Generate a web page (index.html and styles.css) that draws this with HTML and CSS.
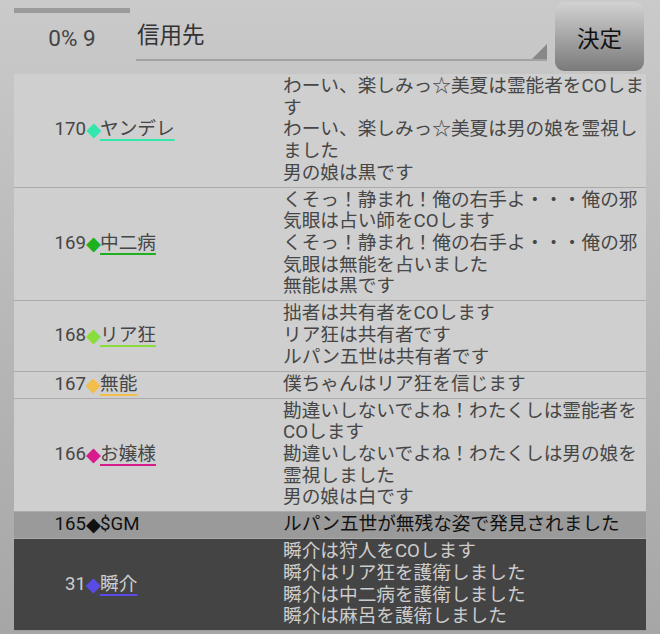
FILE: index.html
```html
<!DOCTYPE html>
<html lang="ja">
<head>
    <meta charset="UTF-8">
    <meta name="viewport" content="width=device-width, initial-scale=1.0">
    <title>信用先</title>
    <link rel="stylesheet" href="styles.css">
</head>
<body>

<div class="top">
    <div class="status">
        <div class="progress"></div>
        <div class="count">0% 9</div>
    </div>
    <div class="target">
        <span class="target-label">信用先</span>
        <span class="arrow"></span>
    </div>
    <button class="decide">決定</button>
</div>

<div class="log">
    <div class="row">
        <span class="no">170</span><span class="mark aqua">◆</span><span class="name aqua">ヤンデレ</span>
        <div class="msg">
            <div>わーい、楽しみっ☆美夏は霊能者をCOします</div>
            <div>わーい、楽しみっ☆美夏は男の娘を霊視しました</div>
            <div>男の娘は黒です</div>
        </div>
    </div>
    <div class="row">
        <span class="no">169</span><span class="mark green">◆</span><span class="name green">中二病</span>
        <div class="msg">
            <div>くそっ！静まれ！俺の右手よ・・・俺の邪気眼は占い師をCOします</div>
            <div>くそっ！静まれ！俺の右手よ・・・俺の邪気眼は無能を占いました</div>
            <div>無能は黒です</div>
        </div>
    </div>
    <div class="row">
        <span class="no">168</span><span class="mark lime">◆</span><span class="name lime">リア狂</span>
        <div class="msg">
            <div>拙者は共有者をCOします</div>
            <div>リア狂は共有者です</div>
            <div>ルパン五世は共有者です</div>
        </div>
    </div>
    <div class="row">
        <span class="no">167</span><span class="mark gold">◆</span><span class="name gold">無能</span>
        <div class="msg">
            <div>僕ちゃんはリア狂を信じます</div>
        </div>
    </div>
    <div class="row">
        <span class="no">166</span><span class="mark pink">◆</span><span class="name pink">お嬢様</span>
        <div class="msg">
            <div>勘違いしないでよね！わたくしは霊能者をCOします</div>
            <div>勘違いしないでよね！わたくしは男の娘を霊視しました</div>
            <div>男の娘は白です</div>
        </div>
    </div>
    <div class="row gm">
        <span class="no">165</span><span class="mark">◆</span><span class="name plain">$GM</span>
        <div class="msg">
            <div>ルパン五世が無残な姿で発見されました</div>
        </div>
    </div>
    <div class="row mine">
        <span class="no">31</span><span class="mark violet">◆</span><span class="name violet">瞬介</span>
        <div class="msg">
            <div>瞬介は狩人をCOします</div>
            <div>瞬介はリア狂を護衛しました</div>
            <div>瞬介は中二病を護衛しました</div>
            <div>瞬介は麻呂を護衛しました</div>
        </div>
    </div>
</div>

</body>
</html>
```

FILE: styles.css
```css
html, body {
    margin: 0;
    height: 634px;
    overflow: hidden;
}
body {
    font-family: Roboto, "Noto Sans CJK JP", sans-serif;
    background: linear-gradient(to bottom, #cacaca, #a6a6a6);
    color: #464646;
    text-autospace: no-autospace;
    text-spacing-trim: space-all;
}
.top {
    display: flex;
    align-items: flex-start;
    height: 74px;
    padding: 0 16px 0 14px;
    box-sizing: border-box;
}
.status {
    width: 116px;
}
.progress {
    margin-top: 8px;
    height: 5px;
    background-color: #9a9a9a;
}
.count {
    margin-top: 12px;
    text-align: center;
    font-size: 22.5px;
    line-height: 26px;
    color: #444;
}
.target {
    flex: 1;
    display: flex;
    align-items: center;
    margin-left: 6px;
    height: 61px;
    padding-top: 7px;
    box-sizing: border-box;
    border-bottom: 2px solid #a2a2a2;
}
.target-label {
    flex: 1;
    padding-left: 1px;
    font-size: 22.5px;
    color: #333;
}
.arrow {
    align-self: flex-end;
    width: 15px;
    height: 15px;
    background-color: #888;
    clip-path: polygon(100% 0, 100% 100%, 0 100%);
}
.decide {
    margin: 2px 0 0 8px;
    width: 89px;
    height: 69px;
    border: none;
    border-radius: 9px;
    background: linear-gradient(to bottom, #d2d2d2, #7a7a7a);
    font-family: Roboto, "Noto Sans CJK JP", sans-serif;
    font-size: 22.5px;
    color: #111;
    padding: 0;
}
.log {
    margin: 0 14px;
}
.row {
    display: grid;
    grid-template-columns: 72px 14px 183px 1fr;
    align-items: center;
    padding: 2.15px 0;
    border-bottom: 1px solid #ababab;
    background-color: #cfcfcf;
    font-size: 18.67px;
    line-height: 21.67px;
}
.no {
    text-align: right;
}
.mark {
    font-family: "DejaVu Sans", sans-serif;
    font-size: 19.5px;
    text-align: center;
}
.name {
    justify-self: start;
    text-decoration: underline 2px;
    text-underline-offset: 4px;
}
.name.plain {
    text-decoration: none;
}
.aqua { color: #33e6ad; }
.green { color: #1fb020; }
.lime { color: #88dd3c; }
.gold { color: #f3be4a; }
.pink { color: #d81b8c; }
.violet { color: #5b4be6; }
.name.aqua, .name.green, .name.lime, .name.gold, .name.pink {
    color: #464646;
}
.name.aqua { text-decoration-color: #33e6ad; }
.name.green { text-decoration-color: #1fb020; }
.name.lime { text-decoration-color: #88dd3c; }
.name.gold { text-decoration-color: #f3be4a; }
.name.pink { text-decoration-color: #d81b8c; }
.gm {
    background-color: #9a9a9a;
    color: #111;
}
.mine {
    background-color: #444;
    color: #cdcdcd;
    border-bottom-color: #9c9c9c;
}
.name.violet {
    color: #cdcdcd;
    text-decoration-color: #5b4be6;
}
```
